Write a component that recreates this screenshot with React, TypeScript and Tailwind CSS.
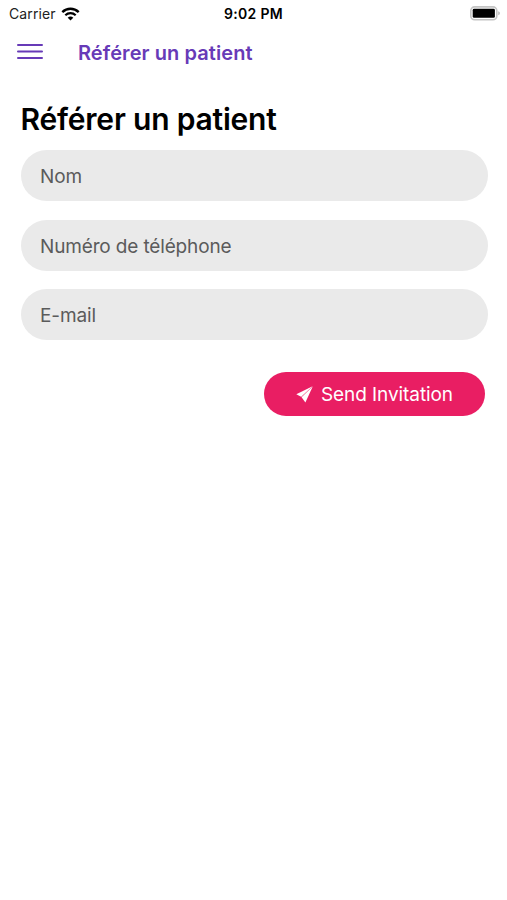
import React from "react";

const fields = [
  { name: "nom", type: "text", label: "Nom", spacing: "tracking-[-0.1px]" },
  { name: "telephone", type: "tel", label: "Numéro de téléphone", spacing: "tracking-[-0.15px]" },
  { name: "email", type: "email", label: "E-mail", spacing: "tracking-[-0.1px]" },
];

const WifiIcon: React.FC = () => (
  <svg className="ml-[5.5px] h-[14px] w-[19px]" viewBox="0 0 19 14" fill="none">
    <path d="M1.3 5.1C6 .6 13 .6 17.7 5.1" stroke="#000" strokeWidth="2.4" />
    <path d="M4.3 8.2c3-2.8 7.4-2.8 10.4 0" stroke="#000" strokeWidth="2.2" />
    <path d="M6.7 10.7c1.6-1.5 4-1.5 5.6 0L9.5 13.5z" fill="#000" />
  </svg>
);

const BatteryIcon: React.FC = () => (
  <svg className="h-[15px] w-[31px]" viewBox="0 0 31 15">
    <rect x="0.8" y="0.9" width="26" height="12.8" rx="3.8" fill="#fff" stroke="#c4c4c4" strokeWidth="1.6" />
    <rect x="2.7" y="2.8" width="22.2" height="9" rx="1.4" fill="#000" />
    <path d="M28.3 5.3c2 .8 2 3.2 0 4z" fill="#b0b0b0" />
  </svg>
);

const MenuIcon: React.FC = () => (
  <svg className="h-[16px] w-[26px]" viewBox="0 0 26 16" stroke="#673ab7" strokeWidth="2" strokeLinecap="round">
    <path d="M1 1h24M1 7.5h24M1 14h24" />
  </svg>
);

const SendIcon: React.FC = () => (
  <svg className="h-[17px] w-[17px]" viewBox="0 0 17 17" fill="#fff">
    <path d="M16.6.2.3 8.3l4.8 2.5z" />
    <path d="M16.7.4 5.6 11.2l3.8 5.4z" />
    <path d="M16.6.2 5.1 10.8l.5.4z" fillOpacity="0.5" />
  </svg>
);

const StatusBar: React.FC = () => (
  <div className="grid h-[27px] grid-cols-3 items-center text-[14px] text-black">
    <div className="flex items-center pl-[9px]">
      <span className="tracking-[0.12px] text-[#222]">Carrier</span>
      <WifiIcon />
    </div>
    <span className="text-center font-semibold tracking-[0.3px]">9:02 PM</span>
    <div className="flex justify-end pr-[6px]">
      <BatteryIcon />
    </div>
  </div>
);

const Header: React.FC = () => (
  <header className="flex h-[50px] items-center pl-[17px] text-[#673ab7]">
    <button type="button" aria-label="Menu">
      <MenuIcon />
    </button>
    <span className="ml-[35px] pt-px text-[20px] font-semibold tracking-[0.08px]">Référer un patient</span>
  </header>
);

export default function App() {
  return (
    <div className="min-h-screen bg-white font-['Inter',sans-serif]">
      <StatusBar />
      <Header />
      <main className="pr-[19.5px] pl-[20.5px] pt-[22px]">
        <h1 className="h-[51px] text-[30px] leading-[40px] font-semibold tracking-[-0.2px] text-black">
          Référer un patient
        </h1>
        <form className="flex flex-col">
          <div className="flex flex-col gap-[18.5px]">
            {fields.map((field) => (
              <input
                key={field.name}
                type={field.type}
                placeholder={field.label}
                className={`h-[51px] w-full rounded-full bg-[#eaeaea] px-[19.5px] pt-[2px] text-[19px] placeholder:text-[#5b5b5b] ${field.spacing}`}
              />
            ))}
          </div>
          <button
            type="button"
            className="mt-[32px] mr-[2.5px] flex h-[44px] w-[221px] items-center gap-2 self-end rounded-full bg-[#e91e63] pl-[32px] text-[19px] text-white"
          >
            <SendIcon />
            <span className="pt-[2px] tracking-[-0.08px] whitespace-nowrap">Send Invitation</span>
          </button>
        </form>
      </main>
    </div>
  );
}
